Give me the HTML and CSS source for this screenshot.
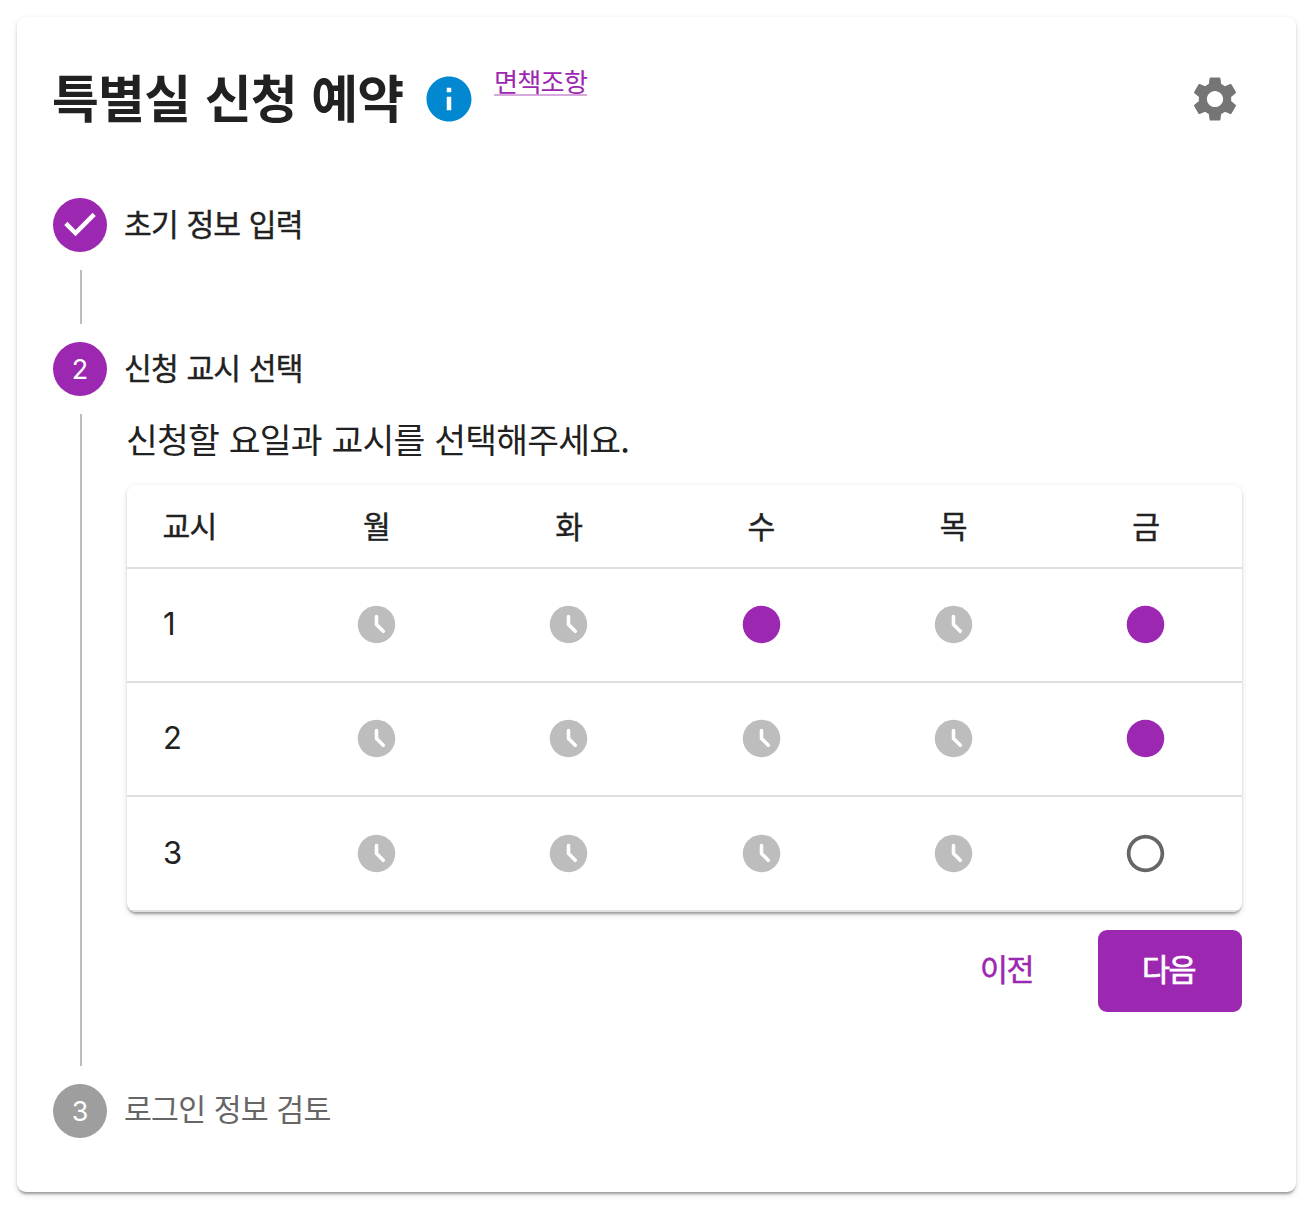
FILE: index.html
```html
<!DOCTYPE html>
<html lang="ko">
<head>
<meta charset="utf-8">
<title>특별실 신청 예약</title>
<link rel="stylesheet" href="styles.css">
</head>
<body>
<svg class="sprite" aria-hidden="true">
  <symbol id="clock" viewBox="0 0 24 24"><path d="M11.99 2C6.47 2 2 6.48 2 12s4.47 10 9.99 10C17.52 22 22 17.52 22 12S17.52 2 11.99 2z"/><path d="M12 7.7v4.3l3.6 3.6" fill="none" stroke="#fff" stroke-width="1.9" stroke-linecap="round" stroke-linejoin="round"/></symbol>
  <symbol id="filled" viewBox="0 0 24 24"><circle cx="12" cy="12" r="10"/></symbol>
  <symbol id="empty" viewBox="0 0 24 24"><path d="M12 2C6.48 2 2 6.48 2 12s4.48 10 10 10 10-4.48 10-10S17.52 2 12 2zm0 18c-4.42 0-8-3.58-8-8s3.58-8 8-8 8 3.58 8 8-3.58 8-8 8z"/></symbol>
</svg>
<main class="card">
  <header class="header">
    <h1 class="title">특별실 신청 예약</h1>
    <svg class="info" viewBox="0 0 24 24"><path d="M12 2C6.48 2 2 6.48 2 12s4.48 10 10 10 10-4.48 10-10S17.52 2 12 2zm1 15h-2v-6h2v6zm0-8h-2V7h2v2z"/></svg>
    <a class="link" href="#">면책조항</a>
    <svg class="gear" viewBox="0 0 24 24"><path d="M19.14 12.94c.04-.3.06-.61.06-.94 0-.32-.02-.64-.07-.94l2.03-1.58c.18-.14.23-.41.12-.61l-1.92-3.32c-.12-.22-.37-.29-.59-.22l-2.39.96c-.5-.38-1.03-.7-1.62-.94l-.36-2.54c-.04-.24-.24-.41-.48-.41h-3.84c-.24 0-.43.17-.47.41l-.36 2.54c-.59.24-1.13.57-1.62.94l-2.39-.96c-.22-.08-.47 0-.59.22L2.74 8.87c-.12.21-.08.47.12.61l2.03 1.58c-.05.3-.09.63-.09.94s.02.64.07.94l-2.03 1.58c-.18.14-.23.41-.12.61l1.92 3.32c.12.22.37.29.59.22l2.39-.96c.5.38 1.03.7 1.62.94l.36 2.54c.05.24.24.41.48.41h3.84c.24 0 .44-.17.47-.41l.36-2.54c.59-.24 1.13-.56 1.62-.94l2.39.96c.22.08.47 0 .59-.22l1.92-3.32c.12-.22.07-.47-.12-.61l-2.01-1.58zM12 15.6c-1.98 0-3.6-1.62-3.6-3.6s1.62-3.6 3.6-3.6 3.6 1.62 3.6 3.6-1.62 3.6-3.6 3.6z"/></svg>
  </header>

  <div class="step">
    <span class="badge"><svg class="check" viewBox="0 0 24 24"><path d="M10 17l-5-5 1.4-1.4 3.6 3.6 7.6-7.6L19 8l-9 9z"/></svg></span>
    <span class="label">초기 정보 입력</span>
  </div>
  <div class="connector"></div>
  <div class="step">
    <span class="badge">2</span>
    <span class="label">신청 교시 선택</span>
  </div>
  <section class="content">
    <p class="guide">신청할 요일과 교시를 선택해주세요.</p>
    <div class="table">
      <div class="row head"><span class="period">교시</span><span>월</span><span>화</span><span>수</span><span>목</span><span>금</span></div>
      <div class="row">
        <span class="period num">1</span>
        <svg class="icon"><use href="#clock"/></svg>
        <svg class="icon"><use href="#clock"/></svg>
        <svg class="icon selected"><use href="#filled"/></svg>
        <svg class="icon"><use href="#clock"/></svg>
        <svg class="icon selected"><use href="#filled"/></svg>
      </div>
      <div class="row">
        <span class="period num">2</span>
        <svg class="icon"><use href="#clock"/></svg>
        <svg class="icon"><use href="#clock"/></svg>
        <svg class="icon"><use href="#clock"/></svg>
        <svg class="icon"><use href="#clock"/></svg>
        <svg class="icon selected"><use href="#filled"/></svg>
      </div>
      <div class="row">
        <span class="period num">3</span>
        <svg class="icon"><use href="#clock"/></svg>
        <svg class="icon"><use href="#clock"/></svg>
        <svg class="icon"><use href="#clock"/></svg>
        <svg class="icon"><use href="#clock"/></svg>
        <svg class="icon open"><use href="#empty"/></svg>
      </div>
    </div>
    <div class="actions">
      <button class="button">이전</button>
      <button class="button primary">다음</button>
    </div>
  </section>
  <div class="step">
    <span class="badge inactive">3</span>
    <span class="label muted">로그인 정보 검토</span>
  </div>
</main>
</body>
</html>
```

FILE: styles.css
```css
* { box-sizing: border-box; }
body {
  margin: 0;
  padding: 17px 18px 23px 17px;
  background: #fff;
  color: #212121;
  font-family: "Noto Sans CJK KR", sans-serif;
  letter-spacing: -0.05em;
  word-spacing: 0.05em;
}
.sprite { display: none; }
.card, .table {
  border-radius: 9px;
  background: #fff;
  box-shadow: 0 3.5px 2.25px -2.25px rgba(0,0,0,.2), 0 2px 2.25px rgba(0,0,0,.14), 0 2.25px 6.75px rgba(0,0,0,.12);
}
.card { height: 1175px; padding: 55px 54px 54px 36px; }
.header { display: flex; align-items: center; height: 54px; margin-bottom: 72px; }
.title { margin: 0; padding-bottom: 6px; font-size: 51px; font-weight: 700; line-height: 54px; white-space: nowrap; width: 369px; text-indent: -1px; }
.info { width: 54px; height: 54px; fill: #0288d1; }
.link {
  margin-left: 18px;
  align-self: flex-start;
  margin-top: -9px;
  height: 33px;
  line-height: 37px;
  font-size: 26.2px;
  color: #9c27b0;
  text-decoration: none;
  border-bottom: 2px solid rgba(156,39,176,.4);
}
.gear { width: 54px; height: 54px; margin-left: auto; fill: #757575; }
.step { display: flex; align-items: center; gap: 17px; height: 54px; }
.badge {
  display: flex;
  align-items: center;
  justify-content: center;
  width: 54px;
  height: 54px;
  border-radius: 50%;
  background: #9c27b0;
  color: #fff;
  font-family: Inter, sans-serif;
  font-size: 27px;
  letter-spacing: 0;
}
.badge.inactive { background: #9e9e9e; }
.check { width: 54px; height: 54px; fill: #fff; }
.label { padding-bottom: 4px; font-size: 30.2px; line-height: 45px; -webkit-text-stroke: 0.4px; }
.label.muted { padding-bottom: 5px; font-size: 30.3px; color: #666; -webkit-text-stroke: 0; }
.connector { height: 54px; margin: 18px 0 18px 27px; border-left: 2px solid #bdbdbd; }
.content { height: 652px; margin: 18px 0 18px 27px; border-left: 2px solid #bdbdbd; padding-left: 45px; }
.guide { margin: 0 0 23px; font-size: 34.6px; line-height: 48px; text-indent: -1px; }
.table { overflow: hidden; }
.row {
  display: grid;
  grid-template-columns: 153.3px repeat(5, 192.3px);
  align-items: center;
  justify-items: center;
  height: 114px;
  padding-bottom: 1px;
  border-bottom: 2px solid #e0e0e0;
}
.row:last-child { height: 115px; padding-bottom: 0; }
.head { height: 84px; padding-bottom: 2px; font-size: 30.2px; -webkit-text-stroke: 0.4px; }
.period { justify-self: start; padding-left: 35.5px; }
.num { padding-left: 36px; padding-bottom: 2px; font-family: Inter, sans-serif; font-size: 31px; letter-spacing: 0; }
.icon { width: 45px; height: 45px; fill: #bdbdbd; }
.icon.selected { fill: #9c27b0; }
.icon.open { fill: #666; }
.actions { display: flex; justify-content: flex-end; gap: 18px; margin-top: 18px; }
.button {
  width: 144px;
  height: 82px;
  padding: 0 3px 7px 0;
  border: 0;
  border-radius: 9px;
  background: transparent;
  color: #9c27b0;
  font: 400 30.4px "Noto Sans CJK KR", sans-serif;
  letter-spacing: -0.05em;
  -webkit-text-stroke: 0.5px;
}
.button.primary { background: #9c27b0; color: #fff; -webkit-text-stroke: 0.7px; }
```
